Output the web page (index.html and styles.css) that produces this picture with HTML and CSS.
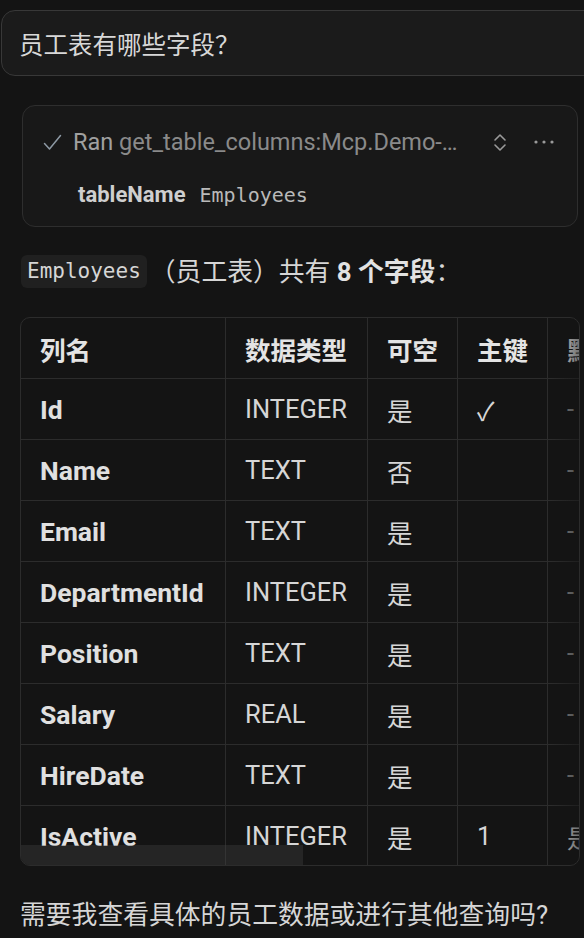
FILE: index.html
```html
<!DOCTYPE html>
<html lang="zh-CN">
<head>
<meta charset="utf-8">
<title>Chat</title>
<link rel="stylesheet" href="styles.css">
</head>
<body>
<div class="page">
  <div class="prompt">员工表有哪些字段？</div>

  <div class="tool">
    <div class="tool-head">
      <svg class="check" width="19" height="17" viewBox="0 0 19 17"><path d="M1.5 9.5 L6.5 15 L17.5 1.5" fill="none" stroke="currentColor" stroke-width="1.5" stroke-linecap="round" stroke-linejoin="round"/></svg>
      <span class="tool-title"><span class="ran">Ran</span> get_table_columns:Mcp.Demo-McpServer</span>
      <svg class="chev" width="14" height="19" viewBox="0 0 14 19"><path d="M2 7 L7 2 L12 7 M2 12 L7 17 L12 12" fill="none" stroke="currentColor" stroke-width="1.6" stroke-linecap="round" stroke-linejoin="round"/></svg>
      <svg class="more" width="20" height="4" viewBox="0 0 20 4"><circle cx="2" cy="2" r="1.6" fill="currentColor"/><circle cx="10" cy="2" r="1.6" fill="currentColor"/><circle cx="18" cy="2" r="1.6" fill="currentColor"/></svg>
    </div>
    <div class="tool-arg"><span class="arg-name">tableName</span><span class="arg-value">Employees</span></div>
  </div>

  <p class="summary"><code class="inline-code">Employees</code>（员工表）共有 <strong>8 个字段</strong>：</p>

  <div class="table-wrap">
    <table class="fields">
      <thead>
        <tr><th class="c1">列名</th><th class="c2">数据类型</th><th class="c3">可空</th><th class="c4">主键</th><th class="c5">默认值</th></tr>
      </thead>
      <tbody>
        <tr><td class="name">Id</td><td>INTEGER</td><td>是</td><td>✓</td><td class="dim">-</td></tr>
        <tr><td class="name">Name</td><td>TEXT</td><td>否</td><td></td><td class="dim">-</td></tr>
        <tr><td class="name">Email</td><td>TEXT</td><td>是</td><td></td><td class="dim">-</td></tr>
        <tr><td class="name">DepartmentId</td><td>INTEGER</td><td>是</td><td></td><td class="dim">-</td></tr>
        <tr><td class="name">Position</td><td>TEXT</td><td>是</td><td></td><td class="dim">-</td></tr>
        <tr><td class="name">Salary</td><td>REAL</td><td>是</td><td></td><td class="dim">-</td></tr>
        <tr><td class="name">HireDate</td><td>TEXT</td><td>是</td><td></td><td class="dim">-</td></tr>
        <tr class="last"><td class="name">IsActive</td><td>INTEGER</td><td>是</td><td>1</td><td>是否在职</td></tr>
      </tbody>
    </table>
    <div class="fade"></div>
    <div class="thumb"></div>
  </div>

  <p class="closing">需要我查看具体的员工数据或进行其他查询吗?</p>
</div>
</body>
</html>
```

FILE: styles.css
```css
html, body {
  margin: 0;
  padding: 0;
  background: #141414;
  overflow: hidden;
}

body {
  font-family: Roboto, "Noto Sans CJK SC", sans-serif;
  color: #d4d4d4;
}

.page {
  display: flex;
  flex-direction: column;
  align-items: flex-start;
  padding-top: 10px;
  width: 584px;
}

.prompt {
  box-sizing: border-box;
  margin-left: 1px;
  width: 640px;
  height: 66px;
  padding: 0 17px;
  display: flex;
  align-items: center;
  border: 1px solid #383838;
  border-radius: 14px;
  background: #1b1b1b;
  font-size: 24.5px;
  color: #d8d8d8;
}

.tool {
  box-sizing: border-box;
  margin: 29px 0 0 22px;
  width: 556px;
  height: 122px;
  border: 1px solid #2e2e2e;
  border-radius: 13px;
  background: #181818;
  padding: 20px 23px 0 20px;
}

.tool-head {
  display: flex;
  align-items: center;
  height: 32px;
  color: #8c8c8c;
}

.check {
  color: #8d99a4;
  flex: none;
  margin-right: 11px;
}

.tool-title {
  flex: 1;
  min-width: 0;
  white-space: nowrap;
  overflow: hidden;
  text-overflow: ellipsis;
  font-size: 23.5px;
  color: #8a8a8a;
}

.ran {
  color: #a0a0a0;
}

.chev {
  flex: none;
  margin-left: 24px;
  color: #9a9a9a;
}

.more {
  flex: none;
  margin-left: 27px;
  color: #9a9a9a;
}

.tool-arg {
  display: flex;
  align-items: baseline;
  margin-top: 24px;
  padding-left: 35px;
  height: 28px;
}

.arg-name {
  font-weight: 700;
  font-size: 22px;
  color: #cfcfcf;
}

.arg-value {
  margin-left: 14px;
  font-family: "DejaVu Sans Mono", monospace;
  font-size: 20px;
  color: #b9b9b9;
}

.summary {
  margin: 28px 0 0 21px;
  height: 34px;
  line-height: 34px;
  font-size: 25.8px;
  color: #d6d6d6;
  white-space: nowrap;
}

.summary strong {
  font-weight: 700;
  color: #e2e2e2;
}

.inline-code {
  box-sizing: border-box;
  height: 33px;
  display: inline-block;
  vertical-align: top;
  line-height: 33px;
  padding: 0 6px;
  margin-right: 3px;
  border-radius: 6px;
  background: #202020;
  font-family: "DejaVu Sans Mono", monospace;
  font-size: 21px;
  color: #d6d6d6;
}

.table-wrap {
  position: relative;
  box-sizing: border-box;
  margin: 28px 0 0 20px;
  width: 560px;
  height: 549px;
  border: 1px solid #2c2c2c;
  border-radius: 10px;
  overflow: hidden;
}

.fields {
  border-collapse: separate;
  border-spacing: 0;
  table-layout: fixed;
  width: 667px;
  font-size: 25.5px;
  color: #d6d6d6;
}

.fields th,
.fields td {
  box-sizing: border-box;
  height: 61px;
  padding: 0 19px;
  text-align: left;
  white-space: nowrap;
  overflow: hidden;
  border-right: 1px solid #2c2c2c;
  border-bottom: 1px solid #2c2c2c;
}

.fields tr.last td {
  border-bottom: none;
  height: 60px;
}

.fields th {
  font-weight: 700;
  color: #e4e4e4;
}

.c1 { width: 205px; }
.c2 { width: 142px; }
.c3 { width: 90px; }
.c4 { width: 90px; }
.c5 { width: 140px; }

.fields td.name {
  font-weight: 700;
  font-size: 26.5px;
  color: #e0e0e0;
}

.fields td.dim {
  color: #8a8a8a;
}

.fade {
  position: absolute;
  top: 0;
  right: 0;
  width: 28px;
  height: 100%;
  background: linear-gradient(to right, rgba(20, 20, 20, 0), rgba(20, 20, 20, 0.55));
  pointer-events: none;
}

.thumb {
  position: absolute;
  left: 0;
  bottom: 0;
  width: 282px;
  height: 20px;
  background: rgba(70, 70, 70, 0.35);
}

.closing {
  margin: 32px 0 0 20px;
  height: 34px;
  line-height: 34px;
  font-size: 25.8px;
  color: #d6d6d6;
  white-space: nowrap;
}
```
